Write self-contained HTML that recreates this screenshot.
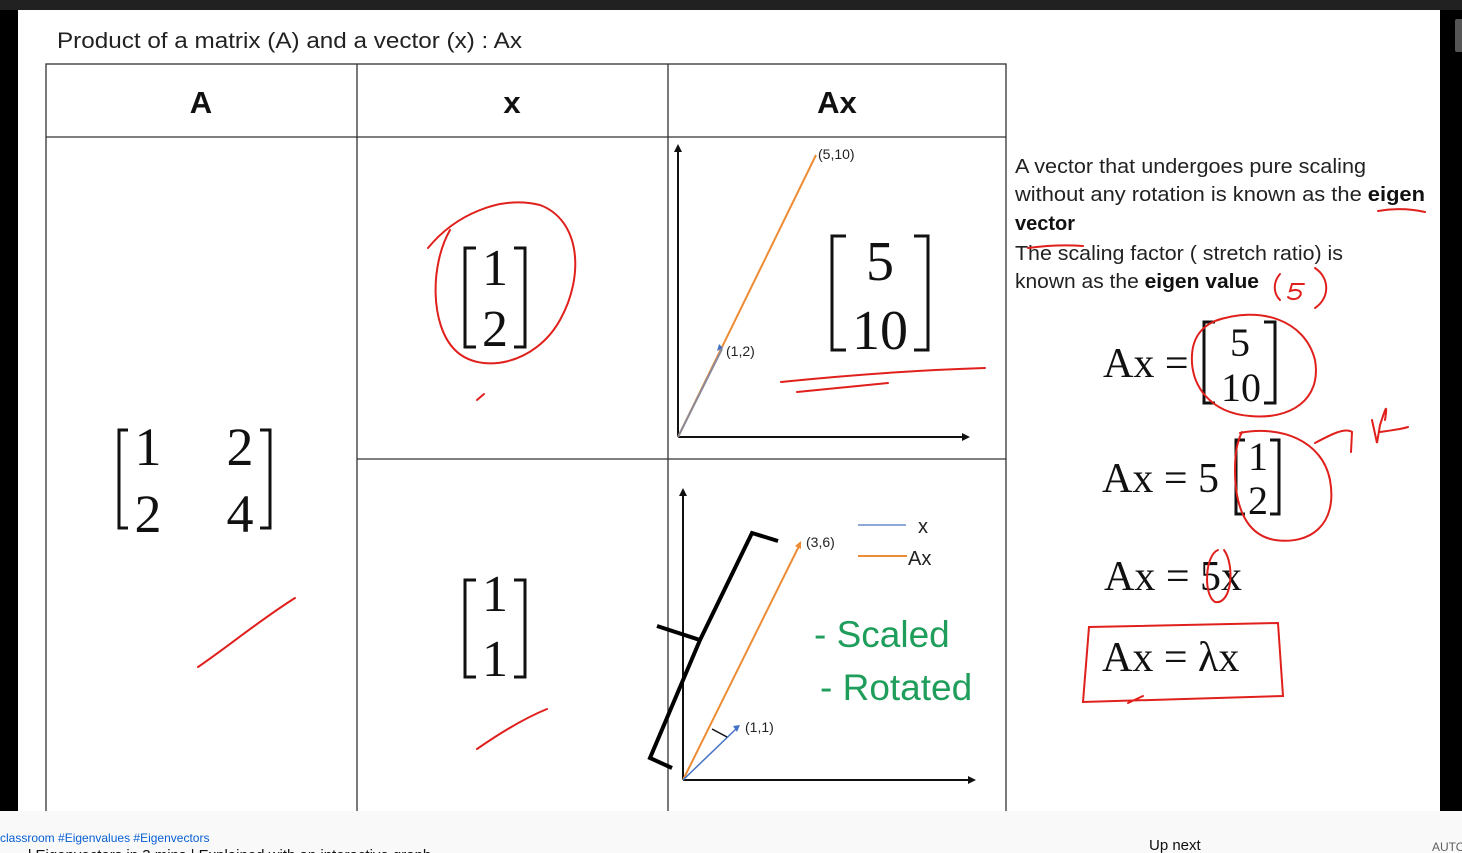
<!DOCTYPE html>
<html><head><meta charset="utf-8"><style>
html,body{margin:0;padding:0;width:1462px;height:853px;overflow:hidden;background:#000}
svg{display:block}
</style></head><body>
<svg width="1462" height="853" viewBox="0 0 1462 853" xmlns="http://www.w3.org/2000/svg">
<rect x="0" y="0" width="1462" height="853" fill="#000"/>
<rect x="0" y="0" width="1462" height="10" fill="#212121"/>
<rect x="18" y="10" width="1422" height="801" fill="#fff"/>
<rect x="1455" y="19" width="10" height="33" rx="2" fill="#555"/>

<g font-family="Liberation Sans, sans-serif" fill="#222">
<text x="57" y="48" font-size="22" textLength="465" lengthAdjust="spacingAndGlyphs">Product of a matrix (A) and a vector (x) : Ax</text>
</g>
<!-- table -->
<g stroke="#333" stroke-width="1.3" fill="none">
<rect x="46" y="64" width="960" height="760"/>
<line x1="46" y1="137" x2="1006" y2="137"/>
<line x1="357" y1="64" x2="357" y2="811"/>
<line x1="668" y1="64" x2="668" y2="811"/>
<line x1="357" y1="459" x2="1006" y2="459"/>
</g>
<g font-family="Liberation Sans, sans-serif" font-weight="bold" font-size="31" fill="#111" text-anchor="middle">
<text x="201" y="113">A</text><text x="512" y="113">x</text><text x="837" y="113">Ax</text>
</g>
<g stroke="#111" stroke-width="3" fill="none">
<path d="M128 430 H119 V528 H128"/><path d="M260 430 H270 V528 H260"/>
<path d="M476 248 H465 V347 H476"/><path d="M514 248 H525 V347 H514"/>
<path d="M476 580 H465 V677 H476"/><path d="M514 580 H525 V677 H514"/>
<path d="M846 236 H832 V350 H846"/><path d="M914 236 H928 V350 H914"/>
<path d="M1215 322 H1204 V403 H1215"/><path d="M1264 322 H1275 V403 H1264"/>
<path d="M1245 440 H1236 V514 H1245"/><path d="M1270 440 H1279 V514 H1270"/>
</g>
<g font-family="Liberation Serif, serif" fill="#111" text-anchor="middle">
<g font-size="54"><text x="148" y="465">1</text><text x="240" y="465">2</text><text x="148" y="532">2</text><text x="240" y="532">4</text></g>
<g font-size="52"><text x="495" y="285">1</text><text x="495" y="346">2</text><text x="495" y="611">1</text><text x="495" y="676">1</text></g>
<g font-size="56"><text x="880" y="280">5</text><text x="880" y="349">10</text></g>
<g font-size="40"><text x="1240" y="356">5</text><text x="1241" y="401">10</text><text x="1258" y="470">1</text><text x="1258" y="514">2</text></g>
</g>
<g font-family="Liberation Serif, serif" fill="#111" font-size="42">
<text x="1103" y="377">Ax =</text>
<text x="1102" y="492">Ax = 5</text>
<text x="1104" y="590">Ax = 5x</text>
<text x="1102" y="671">Ax = λx</text>
</g>
<!-- right text -->
<g font-family="Liberation Sans, sans-serif" font-size="20" fill="#222">
<text x="1015" y="173" textLength="351" lengthAdjust="spacingAndGlyphs">A vector that undergoes pure scaling</text>
<text x="1015" y="201" textLength="410" lengthAdjust="spacingAndGlyphs">without any rotation is known as the <tspan font-weight="bold" fill="#111">eigen</tspan></text>
<text x="1015" y="230" font-weight="bold" fill="#111">vector</text>
<text x="1015" y="260" textLength="328" lengthAdjust="spacingAndGlyphs">The scaling factor ( stretch ratio) is</text>
<text x="1015" y="288" textLength="244" lengthAdjust="spacingAndGlyphs">known as the <tspan font-weight="bold" fill="#111">eigen value</tspan></text>
</g>
<!-- graph 1 -->
<g fill="none" stroke-width="2">
<line x1="678" y1="437" x2="678" y2="150" stroke="#111"/>
<path d="M674 152 L678 144 L682 152Z" fill="#111" stroke="none"/>
<line x1="678" y1="437" x2="964" y2="437" stroke="#111"/>
<path d="M962 433 L970 437 L962 441Z" fill="#111" stroke="none"/>
<line x1="678" y1="437" x2="816" y2="155" stroke="#ed8c34"/>
<line x1="678" y1="437" x2="722" y2="349" stroke="#8a8a9a"/>
<path d="M719 344 L723 348 L717 351Z" fill="#4472c4" stroke="none"/>
</g>
<g font-family="Liberation Sans, sans-serif" font-size="14" fill="#222">
<text x="818" y="159">(5,10)</text><text x="726" y="356">(1,2)</text>
<text x="806" y="547">(3,6)</text><text x="745" y="732">(1,1)</text>
</g>
<!-- graph 2 -->
<g fill="none" stroke-width="2">
<line x1="683" y1="780" x2="683" y2="494" stroke="#111"/>
<path d="M679 496 L683 488 L687 496Z" fill="#111" stroke="none"/>
<line x1="683" y1="780" x2="970" y2="780" stroke="#111"/>
<path d="M968 776 L976 780 L968 784Z" fill="#111" stroke="none"/>
<line x1="683" y1="780" x2="799" y2="546" stroke="#ed8c34"/>
<path d="M795 546 L801 541 L801 549Z" fill="#ed8c34" stroke="none"/>
<line x1="683" y1="780" x2="737" y2="728" stroke="#4472c4" stroke-width="1.5"/>
<path d="M733 726 L740 725 L737 732Z" fill="#4472c4" stroke="none"/>
<path d="M712 729 L727 737" stroke="#111" stroke-width="1.5"/>
<line x1="858" y1="525" x2="906" y2="525" stroke="#8fa9d6"/>
<line x1="858" y1="556" x2="907" y2="556" stroke="#ed8c34"/>
<path d="M778 541 L752 533 L700 640 L657 626 M700 640 L650 758 L672 768" stroke="#000" stroke-width="4"/>
</g>
<g font-family="Liberation Sans, sans-serif" fill="#222" font-size="20">
<text x="918" y="533">x</text><text x="908" y="565">Ax</text>
</g>
<g font-family="Liberation Sans, sans-serif" fill="#1e9e5a" font-size="37">
<text x="814" y="647">- Scaled</text><text x="820" y="700">- Rotated</text>
</g>
<!-- red annotations -->
<g fill="none" stroke="#e0201c" stroke-width="2" stroke-linecap="round">
<path d="M428 248 C455 215 500 195 540 205 C580 220 585 275 560 320 C535 365 480 375 455 350 C430 325 430 265 450 230"/>
<path d="M477 400 L484 394"/>
<path d="M781 382 C850 375 920 370 985 368 M797 392 L888 383"/>
<path d="M198 667 C230 645 260 620 295 598"/>
<path d="M477 749 C500 733 525 718 547 709"/>
<path d="M1378 211 C1395 208 1412 209 1425 212"/>
<path d="M1028 248 C1050 245 1070 245 1083 246"/>
<path d="M1280 274 C1273 282 1273 293 1280 300 M1304 284 L1292 284 L1290 291 C1300 288 1304 293 1298 298 C1294 300 1290 299 1288 297 M1315 268 C1330 278 1330 298 1315 308"/>
<path d="M1215 321 C1260 305 1305 320 1315 360 C1322 400 1290 420 1250 416 C1210 413 1190 385 1192 355 C1193 335 1205 322 1225 318"/>
<path d="M1240 433 C1280 425 1322 440 1330 480 C1338 525 1310 545 1275 540 C1245 535 1235 505 1235 470 C1235 450 1238 440 1242 432"/>
<path d="M1315 443 C1330 435 1345 427 1352 432 L1351 452 M1372 420 L1377 443 L1380 425 C1385 410 1388 400 1385 420 M1380 432 C1395 430 1405 428 1408 427"/>
<path d="M1218 550 C1205 555 1203 595 1215 602 C1232 605 1235 565 1224 550"/>
<path d="M1089 627 L1278 623 L1283 696 L1083 702 Z M1128 703 L1143 696"/>
</g>

<rect x="0" y="811" width="1462" height="42" fill="#f9f9f9"/>
<text x="0" y="842" font-family="Liberation Sans, sans-serif" font-size="12" fill="#065fd4">classroom #Eigenvalues #Eigenvectors</text>
<text x="28" y="860" font-family="Liberation Sans, sans-serif" font-size="15" fill="#111">l Eigenvectors in 3 mins | Explained with an interactive graph</text>
<text x="1149" y="850" font-family="Liberation Sans, sans-serif" font-size="15" fill="#0f0f0f">Up next</text>
<text x="1432" y="851" font-family="Liberation Sans, sans-serif" font-size="12" fill="#606060">AUTO</text>
</svg>
</body></html>
